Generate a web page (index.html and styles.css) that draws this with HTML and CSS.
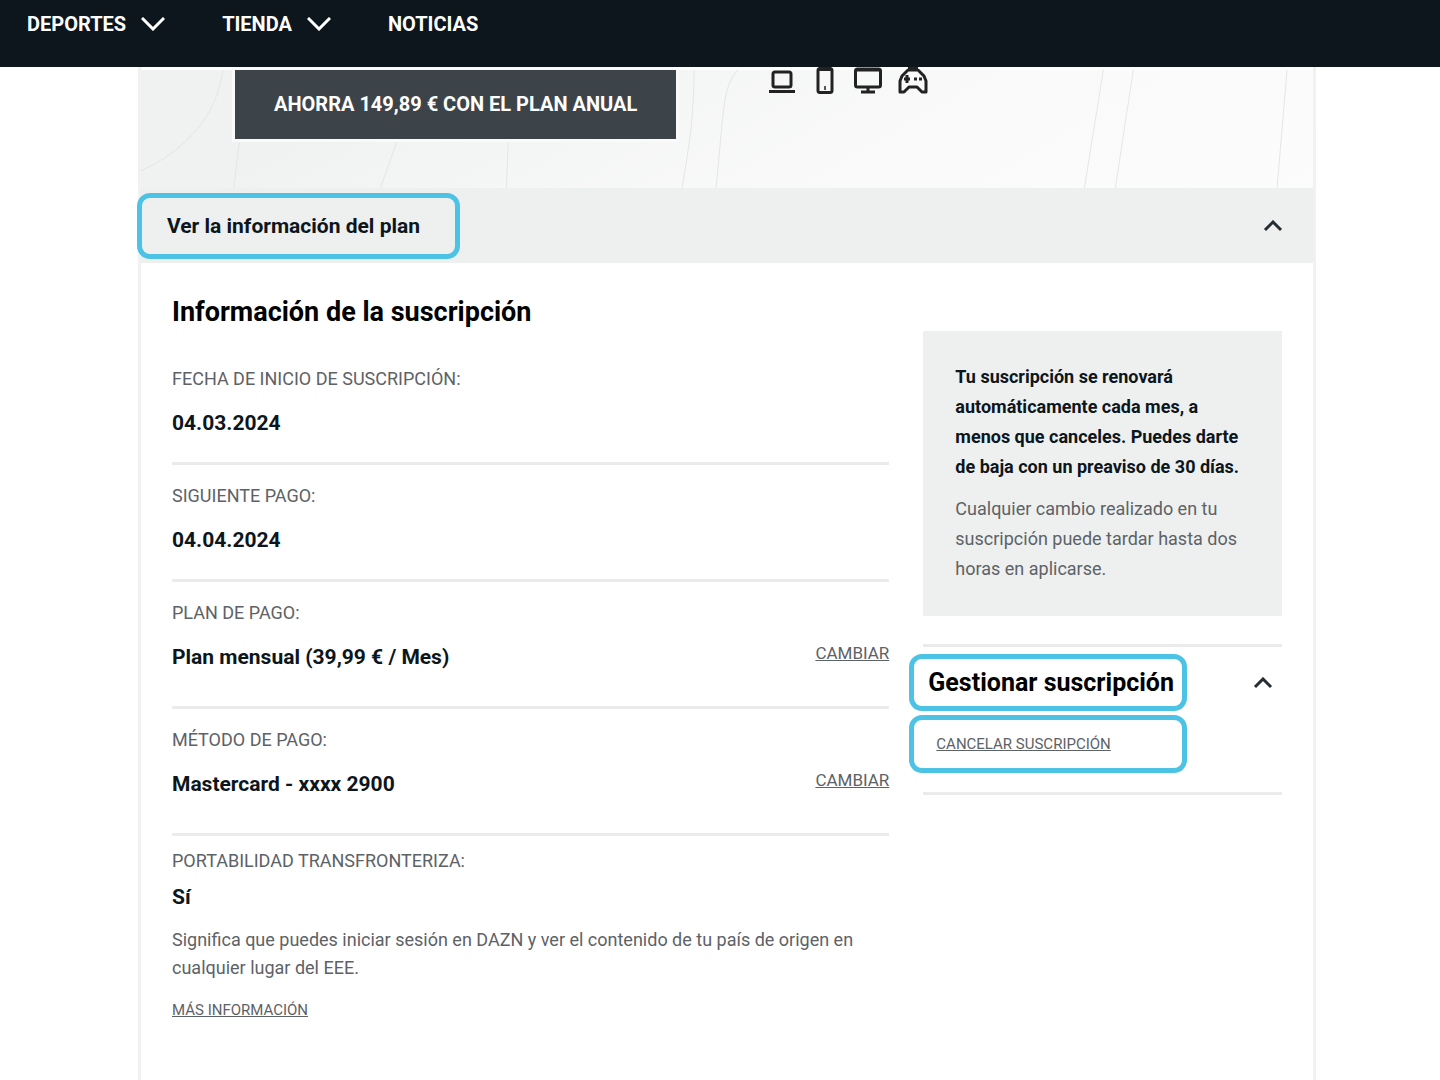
FILE: index.html
```html
<!DOCTYPE html>
<html lang="es">
<head>
  <meta charset="UTF-8" />
  <meta name="viewport" content="width=device-width, initial-scale=1.0"/>
  <title>Mi cuenta - DAZN</title>
  <link rel="stylesheet" href="styles.css">
</head>
<body>

<header>
  <nav>
    <button class="nav-item">DEPORTES
      <svg width="24" height="14" viewBox="0 0 24 14"><path d="M1 1l11 11L23 1"/></svg>
    </button>
    <button class="nav-item">TIENDA
      <svg width="24" height="14" viewBox="0 0 24 14"><path d="M1 1l11 11L23 1"/></svg>
    </button>
    <a class="nav-item" href="#">NOTICIAS</a>
  </nav>
</header>

<main class="card">
  <section class="hero">
    <svg class="hero-lines" viewBox="0 0 1174 117" preserveAspectRatio="none">
      <path d="M82 0C76 46 44 80 0 100M99 66L93 117M258 66L240 117M368 66L366 117M554 0C554 50 548 80 542 117M598 0C582 16 584 40 576 117M964 0L945 117M994 0L976 117M1148 0L1138 117"/>
    </svg>
    <button class="btn-annual">AHORRA 149,89 € CON EL PLAN ANUAL</button>
    <div class="devices">
      <svg width="28" height="28" viewBox="0 0 28 28">
        <rect x="5" y="5" width="18" height="15" rx="2"/><path d="M1 24.500h26"/>
      </svg>
      <svg width="28" height="28" viewBox="0 0 28 28">
        <rect x="7" y="1.500" width="14" height="24" rx="2"/><path d="M8 2h12" stroke-width="4"/><path d="M14 19v4" stroke-width="1.500"/>
      </svg>
      <svg width="28" height="28" viewBox="0 0 28 28">
        <rect x="1.500" y="2" width="25" height="18" rx="2"/><path d="M2 3h24" stroke-width="3"/><path d="M14 20v5M7 25h14"/>
      </svg>
      <svg width="32" height="28" viewBox="0 0 32 28">
        <path d="M11 3h10l6 6 2 5v11h-4l-5-5h-8l-5 5H3V14l2-5z" stroke-linejoin="round"/>
        <path d="M10 8v8M7 12h6"/><path d="M17 12h3M22 12h3"/><path d="M11 2h10" stroke-width="4"/>
      </svg>
    </div>
  </section>

  <button class="plan-bar">
    <span class="highlight plan-title">Ver la información del plan</span>
    <svg class="chevron" width="20" height="12" viewBox="0 0 20 12"><path d="M2 10l8-8 8 8"/></svg>
  </button>

  <div class="content">
    <section class="info">
      <h2>Información de la suscripción</h2>

      <div class="row">
        <div>
          <p class="label">FECHA DE INICIO DE SUSCRIPCIÓN:</p>
          <p class="value">04.03.2024</p>
        </div>
      </div>
      <div class="row">
        <div>
          <p class="label">SIGUIENTE PAGO:</p>
          <p class="value">04.04.2024</p>
        </div>
      </div>
      <div class="row row-link">
        <div>
          <p class="label">PLAN DE PAGO:</p>
          <p class="value">Plan mensual (39,99 € / Mes)</p>
        </div>
        <a class="change" href="#">CAMBIAR</a>
      </div>
      <div class="row row-link">
        <div>
          <p class="label">MÉTODO DE PAGO:</p>
          <p class="value">Mastercard - xxxx 2900</p>
        </div>
        <a class="change" href="#">CAMBIAR</a>
      </div>

      <div class="portability">
        <p class="label">PORTABILIDAD TRANSFRONTERIZA:</p>
        <p class="value">Sí</p>
        <p class="description">Significa que puedes iniciar sesión en DAZN y ver el contenido de tu país de origen en cualquier lugar del EEE.</p>
        <a class="more" href="#">MÁS INFORMACIÓN</a>
      </div>
    </section>

    <aside>
      <div class="notice">
        <p class="notice-main">Tu suscripción se renovará automáticamente cada mes, a menos que canceles. Puedes darte de baja con un preaviso de 30 días.</p>
        <p class="notice-sub">Cualquier cambio realizado en tu suscripción puede tardar hasta dos horas en aplicarse.</p>
      </div>
      <div class="manage">
        <button class="manage-toggle">
          <span class="highlight manage-title">Gestionar suscripción</span>
          <svg class="chevron" width="20" height="12" viewBox="0 0 20 12"><path d="M2 10l8-8 8 8"/></svg>
        </button>
        <div class="highlight manage-cancel">
          <a href="#">CANCELAR SUSCRIPCIÓN</a>
        </div>
      </div>
    </aside>
  </div>
</main>

</body>
</html>
```

FILE: styles.css
```css
* {
  box-sizing: border-box;
}
body {
  font-family: Roboto, "Liberation Sans", sans-serif;
  margin: 0;
  background: #fff;
  color: #0c161c;
  min-height: 100vh;
  display: flex;
  flex-direction: column;
}
h2, p {
  margin: 0;
}
button {
  font-family: inherit;
  border: none;
  background: none;
  padding: 0;
  cursor: pointer;
}
svg {
  fill: none;
  stroke: currentColor;
}

header {
  background: #0c161c;
  height: 67px;
  padding: 10px 27px;
}
nav {
  display: flex;
  gap: 57px;
}
.nav-item {
  display: flex;
  align-items: center;
  gap: 15px;
  color: #fff;
  font-size: 20px;
  font-weight: 700;
  line-height: 28px;
  text-decoration: none;
}
.nav-item svg {
  stroke-width: 3;
}

.card {
  flex: 1;
  margin: 0 124px 0 138px;
  border: 3px solid #f1f1f1;
  border-top: none;
  border-bottom: none;
}
.hero {
  position: relative;
  display: flex;
  align-items: flex-start;
  gap: 92px;
  height: 121px;
  padding: 0 94px;
  border-top: 3px solid #fff;
  background: linear-gradient(150deg, #f0f2f2 20%, #f9f9f9 60%, #fcfcfc);
}
.hero-lines {
  position: absolute;
  top: 0;
  left: 0;
  width: 100%;
  height: 100%;
  stroke: #e4e6e6;
}
.btn-annual {
  position: relative;
  background: #3d4449;
  color: #fff;
  padding: 20px 39px;
  font-size: 20px;
  font-weight: 700;
  line-height: 29px;
  white-space: nowrap;
  box-shadow: 0 0 0 3px #fafafa;
}
.devices {
  position: relative;
  display: flex;
  gap: 15px;
}
.devices svg {
  stroke: #222;
  stroke-width: 3;
  margin-top: -3px;
}

.plan-bar {
  display: flex;
  align-items: center;
  justify-content: space-between;
  width: 100%;
  height: 75px;
  padding-right: 30px;
  background: #eef0f0;
  color: #0c161c;
}
.chevron {
  stroke-width: 3;
  color: #242d34;
}
.highlight {
  display: block;
  border: 5px solid #4cc3e4;
  border-radius: 13px;
}
.plan-title {
  margin-left: -4px;
  padding: 14px 35px 14px 25px;
  font-size: 21px;
  font-weight: 700;
  line-height: 28px;
}

.content {
  display: grid;
  grid-template-columns: 2fr 1fr;
  gap: 34px;
  padding: 33px 31px;
}
h2 {
  font-size: 27px;
  line-height: 32px;
  margin-bottom: 20px;
  color: #000;
}
.row {
  display: flex;
  justify-content: space-between;
  align-items: flex-end;
  padding: 19px 0 27px;
  border-bottom: 3px solid #ebebeb;
}
.row-link {
  padding-bottom: 37px;
}
.label {
  font-size: 18px;
  line-height: 24px;
  color: #5d6266;
  margin-bottom: 20px;
}
.value {
  font-size: 21px;
  font-weight: 700;
  line-height: 24px;
}
.change {
  font-size: 17px;
  line-height: 24px;
  color: #5d6266;
  padding-bottom: 4px;
}
.portability {
  padding-top: 13px;
}
.portability .label {
  margin-bottom: 12px;
}
.description {
  margin: 17px 0 16px;
  font-size: 18px;
  line-height: 28px;
  color: #5d6266;
}
.more {
  display: inline-block;
  font-size: 15px;
  line-height: 24px;
  color: #5d6266;
}

aside {
  padding-top: 35px;
}
.notice {
  background: #eef0f0;
  padding: 31px 32px 32px;
  line-height: 30px;
  font-size: 18px;
}
.notice-main {
  font-weight: 700;
  margin-bottom: 12px;
}
.notice-sub {
  color: #5d6266;
}
.manage {
  margin-top: 28px;
  padding: 7px 0 19px;
  border-top: 3px solid #ebebeb;
  border-bottom: 3px solid #ebebeb;
}
.manage-toggle {
  display: flex;
  align-items: center;
  justify-content: space-between;
  width: 100%;
  padding-right: 9px;
}
.manage-title, .manage-cancel {
  width: 278px;
  margin-left: -14px;
  line-height: 28px;
}
.manage-title {
  height: 57px;
  padding: 10px 14px;
  font-size: 25px;
  font-weight: 700;
  color: #000;
  text-align: left;
  white-space: nowrap;
}
.manage-cancel {
  height: 58px;
  margin-top: 4px;
  padding: 10px 22px;
  font-size: 15px;
}
.manage-cancel a {
  color: #5d6266;
}
```
